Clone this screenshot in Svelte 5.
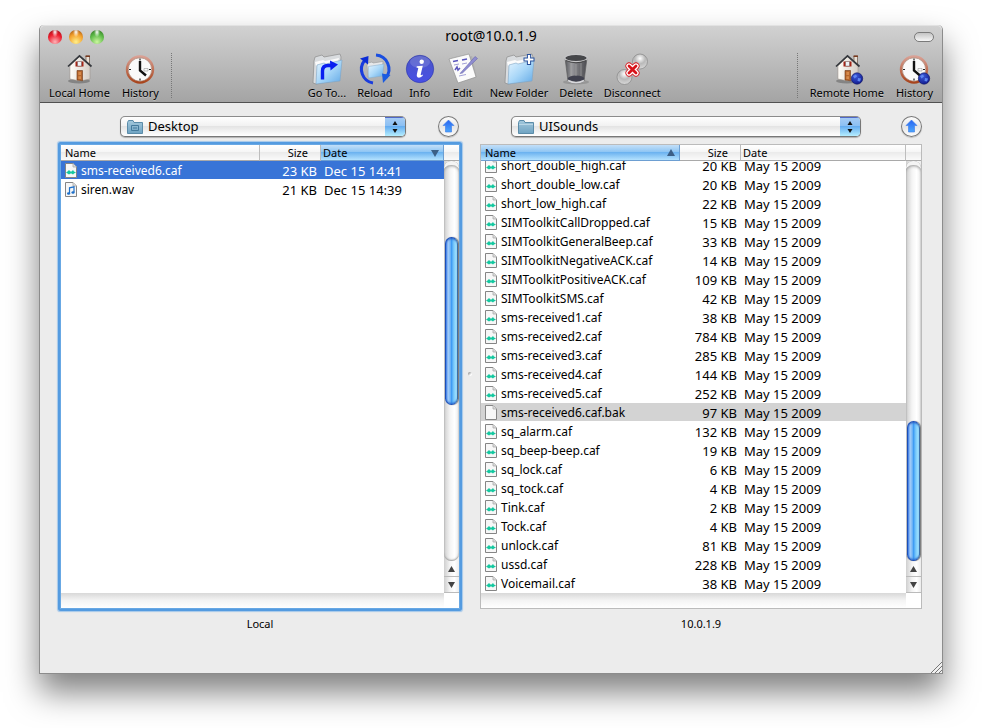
<script lang="ts">
  import { onMount } from "svelte";

  type FileRow = { name: string; size: string; date: string; kind: string };

  const row = (name: string, size: string, date = "May 15 2009", kind = "caf"): FileRow => ({
    name,
    size,
    date,
    kind,
  });

  const localFiles: FileRow[] = [
    row("sms-received6.caf", "23 KB", "Dec 15 14:41"),
    row("siren.wav", "21 KB", "Dec 15 14:39", "wav"),
  ];

  const remoteFiles: FileRow[] = [
    row("short_double_high.caf", "20 KB"),
    row("short_double_low.caf", "20 KB"),
    row("short_low_high.caf", "22 KB"),
    row("SIMToolkitCallDropped.caf", "15 KB"),
    row("SIMToolkitGeneralBeep.caf", "33 KB"),
    row("SIMToolkitNegativeACK.caf", "14 KB"),
    row("SIMToolkitPositiveACK.caf", "109 KB"),
    row("SIMToolkitSMS.caf", "42 KB"),
    row("sms-received1.caf", "38 KB"),
    row("sms-received2.caf", "784 KB"),
    row("sms-received3.caf", "285 KB"),
    row("sms-received4.caf", "144 KB"),
    row("sms-received5.caf", "252 KB"),
    row("sms-received6.caf.bak", "97 KB", "May 15 2009", "plain"),
    row("sq_alarm.caf", "132 KB"),
    row("sq_beep-beep.caf", "19 KB"),
    row("sq_lock.caf", "6 KB"),
    row("sq_tock.caf", "4 KB"),
    row("Tink.caf", "2 KB"),
    row("Tock.caf", "4 KB"),
    row("unlock.caf", "81 KB"),
    row("ussd.caf", "228 KB"),
    row("Voicemail.caf", "38 KB"),
  ];

  const panes = [
    {
      id: "local",
      label: "Local",
      folder: "Desktop",
      files: localFiles,
      selected: "sms-received6.caf",
      sort: "Date",
      thumb: { top: 19, height: 42 },
    },
    {
      id: "remote",
      label: "10.0.1.9",
      folder: "UISounds",
      files: remoteFiles,
      selected: "sms-received6.caf.bak",
      sort: "Name",
      thumb: { top: 65, height: 35 },
    },
  ];

  const groups = [
    [
      { icon: "home", label: "Local Home" },
      { icon: "history", label: "History" },
    ],
    [
      { icon: "goto", label: "Go To..." },
      { icon: "reload", label: "Reload" },
      { icon: "info", label: "Info" },
      { icon: "edit", label: "Edit" },
      { icon: "newfolder", label: "New Folder" },
      { icon: "delete", label: "Delete" },
      { icon: "disconnect", label: "Disconnect" },
    ],
    [
      { icon: "home", label: "Remote Home", remote: true },
      { icon: "history", label: "History", remote: true },
    ],
  ];

  let lists: HTMLElement[] = $state([]);

  onMount(() => {
    // the remote list opens at its end
    lists[1].scrollTop = lists[1].scrollHeight;
  });
</script>

{#snippet folder()}
  <path d="M3 8 L4 4 L11 2 L13 4 L29 1 L30 4 L28 27 L5 31 L2 30 Z" fill="#d9dcdf" stroke="#8d8d8d" stroke-width=".7" />
  <path d="M4 9 L12 7 L14 8 L28 5 L27 9 L5 13 Z" fill="#fbfbfb" />
  <path d="M6 12 L13 10 L15 11 L31 7 L29 28 L5 31 Z" fill="url(#folderBlue)" stroke="#7fa4c4" stroke-width=".6" />
{/snippet}

{#snippet toolIcon(name: string, remote = false)}
  <svg class="tool-icon" viewBox="0 0 32 32" aria-hidden="true">
    {#if name === "home"}
      <ellipse cx="16" cy="28" rx="11" ry="2.500" fill="#000" opacity=".25" />
      <path d="M23 3h3.500v9H23z" fill="#e8dfd5" stroke="#6a5344" stroke-width=".7" />
      <path d="M22.500 2.500h4.500v1.500h-4.500z" fill="#7a3b20" />
      <path d="M7 13 L16.500 3.500 L27 13 V26 L17 28 L7 26 Z" fill="url(#wall)" stroke="#998e85" stroke-width=".5" />
      <path d="M5 13.500 L16.500 2.800 L28.500 13.500" fill="none" stroke="#34373c" stroke-width="1.700" />
      <path d="M12.500 8.500h8v5h-8z" fill="#a52517" />
      <path d="M14.500 8.500h4v4.500h-4z" fill="#eef2f6" stroke="#555" stroke-width=".4" />
      <path d="M14 17.500h5.500v10.300L14 27z" fill="#b5652b" stroke="#6d3614" stroke-width=".6" />
      <path d="M15.400 19h2.600v3h-2.600zM15.400 23.200h2.600v2.800h-2.600z" fill="#d68a4b" />
    {:else if name === "history"}
      <circle cx="16" cy="16.500" r="13" fill="#fafafa" stroke="url(#rim)" stroke-width="2.400" />
      <circle cx="16" cy="16.500" r="11.700" fill="none" stroke="#9b7361" stroke-width=".6" />
      <path d="M16 5.500v2M16 25.500v2M5 16.500h2M25 16.500h2" stroke="#222" stroke-width="1.200" />
      <path d="M20 15.500h4v2.500h-4z" fill="none" stroke="#999" stroke-width=".6" />
      <path d="M16 8v9.500l6 5" fill="none" stroke="#111" stroke-width="2.400" />
    {:else if name === "goto"}
      {@render folder()}
      <path d="M11.500 26.500 V18 Q11.500 12.500 17 12.500 H20" fill="none" stroke="#0a1ff0" stroke-width="3.400" />
      <path d="M19 7.500 L27 11.500 L19.500 17.500 Z" fill="#0a1ff0" />
    {:else if name === "reload"}
      <path d="M8 12 L9 10 L13 9 L14 10 L24 8.500 L23 22 L9 24 Z" fill="#e6e8ea" stroke="#999" stroke-width=".6" />
      <path d="M9.500 13.500 L25 11 L23.500 23 L9.500 25 Z" fill="url(#folderBlue)" stroke="#86aac8" stroke-width=".5" />
      <path d="M14 30 A14 14 0 0 1 5.500 7.500" fill="none" stroke="#1a3cdd" stroke-width="3" />
      <path d="M1 5.500 L9.500 3 L9 11.500 Z" fill="#0b2cd6" />
      <path d="M17 2 A14 14 0 0 1 27 24.500" fill="none" stroke="#1a4ee0" stroke-width="3" />
      <path d="M23 20.500 L31.500 22 L24 30 Z" fill="#1a5be0" />
    {:else if name === "info"}
      <circle cx="16" cy="16" r="13.700" fill="url(#infoBlue)" stroke="#2b35a8" stroke-width=".6" />
      <ellipse cx="16" cy="9" rx="10" ry="6" fill="#fff" opacity=".15" />
      <circle cx="17.700" cy="8.700" r="2.200" fill="#fff" />
      <path d="M12.800 13.200 L18.800 12.800 L16.700 21.500 Q16.600 23 19 21.500 L18.500 23 Q15.500 25.500 13.500 24.300 Q12.300 23.500 12.900 21 L14.300 15 L12.500 14.500 Z" fill="#fff" />
    {:else if name === "edit"}
      <path d="M6 9 L25 3 L30 25 L12 31 Z" fill="#b0b0b0" />
      <path d="M2 6 L22 1 L29 24 L11 30 Z" fill="#fbfbfb" stroke="#888" stroke-width=".6" />
      <path d="M6 8.500 l5 -1 M15 7 l5 -1" stroke="#5b57bd" stroke-width="1.700" />
      <path d="M8 17 l2 -3 l1 3 l2 -2" fill="none" stroke="#5b57bd" stroke-width="1.500" />
      <path d="M7 12 l5 -1 M15 11 l5 -1 M12 23 l7 -1.500" stroke="#a3a1d6" stroke-width="1" />
      <path d="M13 20.500 L28 3.500 L30.500 5.500 L15.500 20 Z" fill="#8f8dd0" stroke="#5a58a8" stroke-width=".5" />
    {:else if name === "newfolder"}
      {@render folder()}
      <path d="M26 1v11M20.500 6.500h11" stroke="#27509c" stroke-width="4.200" />
      <path d="M26 2v9M21.500 6.500h9" stroke="#fff" stroke-width="2.200" />
    {:else if name === "delete"}
      <ellipse cx="16" cy="29" rx="13" ry="2.500" fill="#000" opacity=".14" />
      <path d="M5 5 L8 28 Q16 32.500 24 28 L27 5 Z" fill="url(#bin)" stroke="#5e5e60" stroke-width=".7" />
      <ellipse cx="16" cy="25.500" rx="8.300" ry="3" fill="#40414e" />
      <path d="M8 27.500 Q16 32 24 27.500" fill="none" stroke="#d8d8dc" stroke-width="1.700" />
      <path d="M11 10v13M16 11v12M21 10v13" stroke="#aaa" stroke-width=".6" />
      <ellipse cx="16" cy="5" rx="11.300" ry="3.600" fill="#46474a" stroke="#c6c6c8" stroke-width="1.300" />
      <path d="M6 7.500 Q16 12 26 7.500" fill="none" stroke="#333" stroke-width=".8" />
    {:else if name === "disconnect"}
      <circle cx="24" cy="8.500" r="7.500" fill="url(#ball)" stroke="#858585" stroke-width=".7" />
      <circle cx="8.500" cy="24" r="7.500" fill="url(#ball)" stroke="#858585" stroke-width=".7" />
      <g stroke-linecap="round">
        <path d="M13 13 L20 20 M20 13 L13 20" stroke="#d8141a" stroke-width="7" />
        <path d="M13 13 L20 20 M20 13 L13 20" stroke="#fff" stroke-width="5.400" />
        <path d="M13 13 L20 20 M20 13 L13 20" stroke="#d8141a" stroke-width="2.800" />
      </g>
    {/if}
    {#if remote}
      <circle cx="26" cy="25.500" r="5.700" fill="url(#globe)" stroke="#0d1460" stroke-width=".6" />
      <path d="M22 23 l3 -1.500 l1 2 l-2.500 2 z M27 25 l3 .5 l-1 3 l-2.500 -.5 z" fill="#5d86f2" />
    {/if}
  </svg>
{/snippet}

{#snippet fileIcon(kind: string)}
  <svg class="file-icon" viewBox="0 0 12 15" aria-hidden="true">
    <path d="M.5 .5h7.500l3.500 3.500v10.500H.5z" fill="#f7f7f7" stroke="#858585" />
    <path d="M8 .5v3.500h3.500" fill="#ddd" stroke="#aaa" stroke-width=".8" />
    {#if kind === "caf"}
      <path d="M1 9.500 L2.500 8.500 L4 7 L5.500 8.500 H6.500 L8 7 L9 8.500 L11 9.500 L9 10.500 L8 11.500 L6.500 10.500 H5.500 L4 11.500 L2.500 10.500 Z" fill="#14c8a0" />
    {:else if kind === "wav"}
      <path d="M4.500 11.500V5.800l4.500-1v5.500" fill="none" stroke="#1d6fc9" stroke-width="1.200" />
      <ellipse cx="3.600" cy="11.500" rx="1.600" ry="1.300" fill="#1d6fc9" />
      <ellipse cx="8" cy="10.500" rx="1.600" ry="1.300" fill="#1d6fc9" />
    {/if}
  </svg>
{/snippet}

<svg class="defs" width="0" height="0" aria-hidden="true">
  <defs>
    <linearGradient id="folderBlue" x1="0" y1="0" x2="1" y2="1">
      <stop offset="0" stop-color="#e6f5ff" />
      <stop offset=".5" stop-color="#a9d7f8" />
      <stop offset="1" stop-color="#62a9e6" />
    </linearGradient>
    <linearGradient id="wall">
      <stop offset="0" stop-color="#fffdf8" />
      <stop offset="1" stop-color="#d5cec6" />
    </linearGradient>
    <linearGradient id="rim" x1="0" y1="0" x2="0" y2="1">
      <stop offset="0" stop-color="#d9a094" />
      <stop offset="1" stop-color="#a8441c" />
    </linearGradient>
    <linearGradient id="infoBlue" x1="0" y1="0" x2="0" y2="1">
      <stop offset="0" stop-color="#4c56c4" />
      <stop offset="1" stop-color="#474fe6" />
    </linearGradient>
    <linearGradient id="bin">
      <stop offset="0" stop-color="#55565a" />
      <stop offset=".3" stop-color="#98989c" />
      <stop offset=".6" stop-color="#747478" />
      <stop offset="1" stop-color="#4b4b50" />
    </linearGradient>
    <radialGradient id="ball" cx=".5" cy=".3" r=".7">
      <stop offset="0" stop-color="#fff" />
      <stop offset=".5" stop-color="#b9b9b9" />
      <stop offset="1" stop-color="#d9d9d9" />
    </radialGradient>
    <radialGradient id="globe" cx=".4" cy=".3" r=".8">
      <stop offset="0" stop-color="#3c5bd8" />
      <stop offset="1" stop-color="#0c1388" />
    </radialGradient>
    <linearGradient id="smallFolder" x1="0" y1="0" x2="0" y2="1">
      <stop offset="0" stop-color="#a3c8dc" />
      <stop offset="1" stop-color="#6fa3c2" />
    </linearGradient>
    <linearGradient id="upArrow" x1="0" y1="0" x2="0" y2="1">
      <stop offset="0" stop-color="#2764f2" />
      <stop offset="1" stop-color="#4ba6fb" />
    </linearGradient>
  </defs>
</svg>

<div class="desktop">
  <div class="window">
    <header>
      <div class="titlebar">
        <div class="lights">
          <button class="light red" aria-label="Close"></button>
          <button class="light amber" aria-label="Minimize"></button>
          <button class="light green" aria-label="Zoom"></button>
        </div>
        <span class="title">root@10.0.1.9</span>
        <button class="pill" aria-label="Toggle toolbar"></button>
      </div>
      <div class="toolbar">
        {#each groups as group}
          <div class="group">
            {#each group as tool}
              <button class="tool">
                {@render toolIcon(tool.icon, tool.remote)}
                <span>{tool.label}</span>
              </button>
            {/each}
          </div>
        {/each}
      </div>
    </header>

    <main>
      {#each panes as pane, i}
        {#if i === 1}
          <div class="splitter"><span class="dimple"></span></div>
        {/if}
        <section class="pane {pane.id}">
          <div class="location">
            <div class="popup">
              <select aria-label="{pane.label} folder">
                <option>{pane.folder}</option>
              </select>
              <svg class="popup-folder" viewBox="0 0 16 14" aria-hidden="true">
                <path d="M.5 2.500 L1.500 .5 H6 L7 2.500 H15.500 V13.500 H.5 Z" fill="url(#smallFolder)" stroke="#5b8ca9" />
                {#if pane.id === "local"}
                  <path d="M4.500 5.500h7v5h-7zM6 8h4" fill="none" stroke="#447a9c" />
                {:else}
                  <path d="M1 4.500h14" stroke="#b9d6e6" />
                {/if}
              </svg>
              <span class="cap">
                <svg viewBox="0 0 6 14" aria-hidden="true">
                  <path d="M3 1l2.500 4h-5zM3 13l2.500-4h-5z" fill="#111" />
                </svg>
              </span>
            </div>
            <button class="up" aria-label="Parent folder">
              <svg viewBox="0 0 21 21" aria-hidden="true">
                <path d="M10.500 4 L16 9.500 H13.500 V16 H7.500 V9.500 H5 Z" fill="url(#upArrow)" stroke="#3c7be8" stroke-width=".6" />
              </svg>
            </button>
          </div>

          <div class="frame">
            <table>
              <thead>
                <tr>
                  {#each ["Name", "Size", "Date"] as column}
                    <th class={column.toLowerCase()} class:sorted={pane.sort === column}>
                      {column}
                      {#if pane.sort === column}
                        <svg class="sort" viewBox="0 0 8 8" aria-hidden="true">
                          <path d={pane.id === "local" ? "M0 1h8l-4 7z" : "M0 7h8l-4-7z"} fill="#3b5f86" />
                        </svg>
                      {/if}
                    </th>
                  {/each}
                </tr>
              </thead>
              <tbody bind:this={lists[i]}>
                {#each pane.files as file}
                  <tr class:selected={file.name === pane.selected}>
                    <td class="name">{@render fileIcon(file.kind)}{file.name}</td>
                    <td class="size">{file.size}</td>
                    <td class="date">{file.date}</td>
                  </tr>
                {/each}
              </tbody>
            </table>
            <div class="side">
              <div class="side-head"></div>
              <div class="track">
                <div class="thumb" style="top: {pane.thumb.top}%; height: {pane.thumb.height}%"></div>
              </div>
              <button class="arrow" aria-label="Scroll up">
                <svg viewBox="0 0 7 6" aria-hidden="true"><path d="M3.500 0 7 6H0z" fill="#444" /></svg>
              </button>
              <button class="arrow" aria-label="Scroll down">
                <svg viewBox="0 0 7 6" aria-hidden="true"><path d="M3.500 6 7 0H0z" fill="#444" /></svg>
              </button>
            </div>
            <div class="bottom-track"></div>
          </div>
          <p>{pane.label}</p>
        </section>
      {/each}
    </main>

    <svg class="grip" viewBox="0 0 12 12" aria-hidden="true">
      <path d="M1 12 12 1M5 12l7-7M9 12l3-3" stroke="#777" />
      <path d="M2 12.500 12.500 2M6 12.500l6.500-6.500" stroke="#fff" stroke-width=".6" />
    </svg>
  </div>
</div>

<style>
  :global(body) {
    margin: 0;
    background: #fff;
  }

  .desktop {
    box-sizing: border-box;
    height: 100vh;
    padding: 25px 39px 54px;
    overflow: hidden;
    font-family: "Lucida Grande", "Noto Sans", "Open Sans", sans-serif;
    font-size: 12px;
    color: #000;
  }

  .defs {
    position: absolute;
  }

  button {
    padding: 0;
    border: none;
    background: none;
    font: inherit;
    color: inherit;
  }

  svg {
    display: block;
  }

  .window {
    box-sizing: border-box;
    position: relative;
    display: flex;
    flex-direction: column;
    height: 100%;
    border: 1px solid #8c8c8c;
    border-top: none;
    border-radius: 5px 5px 0 0;
    background: #ececec;
    box-shadow: 0 18px 32px rgba(0, 0, 0, 0.5);
  }

  header {
    border-bottom: 1px solid #515151;
    border-radius: 5px 5px 0 0;
    background: linear-gradient(#d2d2d2, #a4a4a4);
    box-shadow: inset 0 1px #e2e2e2;
  }

  .titlebar {
    display: grid;
    grid-template-columns: 1fr auto 1fr;
    align-items: center;
    height: 23px;
    padding: 0 8px;
  }

  .title {
    font-size: 14px;
    line-height: 20px;
    padding-bottom: 2px;
  }

  .lights {
    display: flex;
    gap: 7px;
  }

  .light {
    width: 14px;
    height: 14px;
    border-radius: 50%;
  }

  .red {
    background: radial-gradient(ellipse at 50% 15%, #fff 0, #fff0 30%),
      radial-gradient(circle at 50% 85%, #ffb3b8, #ec1c2c 55%, #8f1018);
  }

  .amber {
    background: radial-gradient(ellipse at 50% 15%, #fff 0, #fff0 30%),
      radial-gradient(circle at 50% 85%, #fff08a, #f3a02c 55%, #92460c);
  }

  .green {
    background: radial-gradient(ellipse at 50% 15%, #fff 0, #fff0 30%),
      radial-gradient(circle at 50% 85%, #ccf7a0, #5cb947 55%, #2c6a1e);
  }

  .pill {
    justify-self: end;
    width: 20px;
    height: 10px;
    border: 1px solid #7a7a7a;
    border-radius: 5px;
    background: linear-gradient(#c4c4c4, #f6f6f6);
  }

  .toolbar {
    display: flex;
    justify-content: space-between;
    height: 45px;
    padding: 5px 0 4px;
    font-size: 11px;
    line-height: 14px;
  }

  .group {
    display: flex;
    gap: 11px;
  }

  .group:first-child {
    gap: 12px;
    padding: 0 12px 0 9px;
    border-right: 1px dotted #777;
  }

  .group:last-child {
    gap: 12px;
    padding: 0 9px 0 12px;
    border-left: 1px dotted #777;
  }

  .tool {
    display: flex;
    flex-direction: column;
    align-items: center;
    gap: 1px;
    text-shadow: 0 1px rgba(255, 255, 255, 0.3);
  }

  .tool-icon {
    width: 32px;
    height: 32px;
    overflow: visible;
  }

  main {
    flex: 1;
    display: grid;
    grid-template-columns: 400fr 20px 442fr;
    grid-template-rows: minmax(0, 1fr);
    min-height: 0;
    padding: 13px 20px 41px;
  }

  .pane {
    display: flex;
    flex-direction: column;
    min-width: 0;
  }

  .location {
    display: flex;
    margin-bottom: 7px;
  }

  .local .location {
    gap: 32px;
    padding: 0 1px 0 60px;
  }

  .remote .location {
    gap: 40px;
    padding-left: 31px;
  }

  .popup {
    flex: 1;
    display: grid;
    grid-template-columns: 6px 16px 1fr 20px;
    align-items: center;
    box-sizing: border-box;
    height: 21px;
    border: 1px solid #777;
    border-top-color: #8c8c8c;
    border-radius: 5px;
    background: linear-gradient(#fff, #f2f2f2 45%, #e4e4e4 50%, #fff);
    box-shadow: 0 1px 1px rgba(0, 0, 0, 0.25);
    overflow: hidden;
  }

  select {
    grid-area: 1 / 1 / 2 / 5;
    appearance: none;
    width: 100%;
    height: 19px;
    padding: 0 24px 0 27px;
    border: none;
    background: none;
    font: inherit;
    font-size: 13px;
    line-height: 19px;
    color: #000;
  }

  .popup-folder {
    grid-area: 1 / 2;
    width: 16px;
    height: 14px;
    pointer-events: none;
  }

  .cap {
    grid-area: 1 / 4;
    display: grid;
    place-items: center;
    height: 19px;
    background: linear-gradient(#a9cdf4, #8cc0f3 45%, #66adf0 50%, #b5eeff);
    box-shadow: inset 0 1px #5068c8;
    pointer-events: none;
  }

  .cap svg {
    width: 6px;
    height: 14px;
  }

  .up {
    width: 21px;
    height: 21px;
    border-radius: 50%;
    background: linear-gradient(#fff, #e6e6e6 50%, #fff);
    box-shadow: inset 0 0 0 1px #777, 0 1px 1px rgba(0, 0, 0, 0.2);
  }

  .frame {
    flex: 1;
    display: grid;
    grid-template-columns: minmax(0, 1fr) 15px;
    grid-template-rows: minmax(0, 1fr) 15px;
    min-height: 0;
    border: 1px solid #bbb;
    background: #fff;
  }

  .local .frame {
    border-color: #68a8e4;
    border-radius: 1px;
    box-shadow: 0 0 0 2px #549be0, 0 0 1px 3px #a5c8ea;
  }

  /* the header stays put while the body scrolls under it */
  table {
    display: flex;
    flex-direction: column;
    min-height: 0;
  }

  thead {
    display: block;
  }

  tbody {
    display: block;
    flex: 1;
    min-height: 0;
    overflow: hidden;
  }

  tr {
    display: grid;
    grid-template-columns: 199px 61px 1fr;
  }

  th {
    box-sizing: border-box;
    display: flex;
    align-items: center;
    justify-content: space-between;
    height: 16px;
    padding: 0 4px;
    border-right: 1px solid #bdbdbd;
    border-bottom: 1px solid #a9a9a9;
    background: linear-gradient(#fff, #f6f6f6 45%, #ebebeb 50%, #fafafa);
    font-size: 11px;
    font-weight: normal;
    line-height: 14px;
  }

  th.size {
    justify-content: flex-end;
    padding-right: 12px;
  }

  th.date {
    padding-left: 2px;
  }

  th.sorted {
    border-color: #6d9fd2;
    background: linear-gradient(#c3dff8, #8fc6f4 45%, #6cb3f0 50%, #b4e2fe);
  }

  .sort {
    width: 8px;
    height: 8px;
  }

  td {
    box-sizing: border-box;
    height: 19px;
    padding: 2px 4px 0;
    border-bottom: 1px solid #fff;
    font-size: 13px;
    line-height: 16px;
    white-space: nowrap;
  }

  td.name {
    display: flex;
    gap: 4px;
    font-size: 12px;
  }

  td.size {
    text-align: right;
  }

  td.date {
    padding-left: 3px;
  }

  .file-icon {
    width: 12px;
    height: 15px;
  }

  .selected td {
    background: #d3d3d3;
  }

  .local .selected td {
    background-color: #3874d7;
    color: #fff;
  }

  .side {
    display: flex;
    flex-direction: column;
    min-height: 0;
    background: linear-gradient(90deg, #cfcfcf, #f4f4f4 40%, #fff 70%, #ececec);
  }

  .side-head {
    height: 15px;
    border-bottom: 1px solid #a9a9a9;
    background: linear-gradient(#fff, #f6f6f6 45%, #ebebeb 50%, #fafafa);
  }

  .track {
    position: relative;
    flex: 1;
    border-radius: 7px;
    box-shadow: inset 0 5px 0 -1px #f4f4f4, inset 0 7px 3px -2px #999, inset 0 -1px 2px #999;
  }

  .thumb {
    position: absolute;
    left: 1px;
    right: 1px;
    box-sizing: border-box;
    border: 1px solid #1c4fb8;
    border-right-color: #3a6ea8;
    border-radius: 7px;
    background: linear-gradient(90deg, #3f80e8, #a4ccf8 20%, #78b8f6 38%, #3f9cf4 50%, #7ccbfb 72%, #a8e8ff);
    box-shadow: inset 0 2px 2px -1px #2c5cc0, inset 0 -2px 2px -1px #2c6cd0, 1px 0 1px #777;
  }

  .arrow {
    display: grid;
    place-items: center;
    height: 16px;
    box-shadow: inset 0 -1px #bbb;
  }

  .arrow svg {
    width: 7px;
    height: 6px;
  }

  .bottom-track {
    background: linear-gradient(#d8d8d8, #f4f4f4 50%, #fff);
  }

  .splitter {
    display: grid;
    place-items: center;
  }

  .dimple {
    width: 4px;
    height: 4px;
    border-radius: 50%;
    background: linear-gradient(135deg, #777, #fff 70%);
  }

  p {
    margin: 7px 0 0;
    font-size: 11px;
    line-height: 16px;
    text-align: center;
  }

  .grip {
    position: absolute;
    right: 0;
    bottom: 0;
    width: 12px;
    height: 12px;
  }
</style>
